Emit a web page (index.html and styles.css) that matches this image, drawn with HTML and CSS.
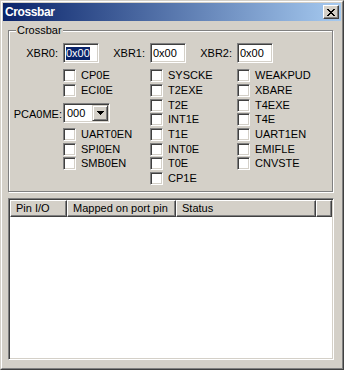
FILE: index.html
```html
<!DOCTYPE html>
<html lang="en">
<head>
<meta charset="UTF-8">
<title>Crossbar</title>
<link rel="stylesheet" href="styles.css">
</head>
<body>
<div class="window">
  <div class="frame">
    <div class="titlebar">
      <span class="title">Crossbar</span>
      <button class="close">
        <svg width="8" height="7" viewBox="0 0 8 7" shape-rendering="crispEdges"><path d="M0 0h2v1H0zM6 0h2v1H6zM1 1h2v1H1zM5 1h2v1H5zM2 2h4v1H2zM3 3h2v1H3zM2 4h4v1H2zM1 5h2v1H1zM5 5h2v1H5zM0 6h2v1H0zM6 6h2v1H6z" fill="#000"/></svg>
      </button>
    </div>

    <div class="group">
      <span class="legend">Crossbar</span>
      <div class="xbr-row">
        <div class="xbr"><span>XBR0:</span><div class="edit"><span class="sel">0x00</span></div></div>
        <div class="xbr"><span>XBR1:</span><div class="edit"><span>0x00</span></div></div>
        <div class="xbr"><span>XBR2:</span><div class="edit"><span>0x00</span></div></div>
      </div>
      <div class="bits">
        <span class="pca-label">PCA0ME:</span>
        <div class="combo">
          <span class="combo-text">000</span>
          <span class="combo-btn">
            <svg width="7" height="4" viewBox="0 0 7 4" shape-rendering="crispEdges"><path d="M0 0h7v1H0zM1 1h5v1H1zM2 2h3v1H2zM3 3h1v1H3z" fill="#000"/></svg>
          </span>
        </div>

        <label class="chk c1"><span class="box"></span>CP0E</label>
        <label class="chk c1"><span class="box"></span>ECI0E</label>
        <label class="chk c1"><span class="box"></span>UART0EN</label>
        <label class="chk c1"><span class="box"></span>SPI0EN</label>
        <label class="chk c1"><span class="box"></span>SMB0EN</label>

        <label class="chk c2"><span class="box"></span>SYSCKE</label>
        <label class="chk c2"><span class="box"></span>T2EXE</label>
        <label class="chk c2"><span class="box"></span>T2E</label>
        <label class="chk c2"><span class="box"></span>INT1E</label>
        <label class="chk c2"><span class="box"></span>T1E</label>
        <label class="chk c2"><span class="box"></span>INT0E</label>
        <label class="chk c2"><span class="box"></span>T0E</label>
        <label class="chk c2"><span class="box"></span>CP1E</label>

        <label class="chk c3"><span class="box"></span>WEAKPUD</label>
        <label class="chk c3"><span class="box"></span>XBARE</label>
        <label class="chk c3"><span class="box"></span>T4EXE</label>
        <label class="chk c3"><span class="box"></span>T4E</label>
        <label class="chk c3"><span class="box"></span>UART1EN</label>
        <label class="chk c3"><span class="box"></span>EMIFLE</label>
        <label class="chk c3"><span class="box"></span>CNVSTE</label>
      </div>
    </div>

    <div class="list">
      <div class="list-head">
        <div class="col col-pin">Pin I/O</div>
        <div class="col col-map">Mapped on port pin</div>
        <div class="col col-status">Status</div>
        <div class="col col-fill"></div>
      </div>
    </div>
  </div>
</div>
</body>
</html>
```

FILE: styles.css
```css
*{
  margin: 0;
  padding: 0;
  box-sizing: border-box;
}
body{
  font-family: "Liberation Sans", Arial, sans-serif;
  font-size: 11px;
  color: #000;
  background: #d4d0c8;
}
.window{
  width: 344px;
  height: 370px;
  border: 1px solid;
  border-color: #d4d0c8 #404040 #404040 #d4d0c8;
  background: #d4d0c8;
}
.frame{
  height: 100%;
  border: 1px solid;
  border-color: #fff #808080 #808080 #fff;
  padding: 1px;
}

/* title bar */
.titlebar{
  height: 18px;
  display: flex;
  align-items: center;
  padding: 0 2px;
  background: linear-gradient(to right, #0a246a, #a6caf0);
}
.title{
  color: #fff;
  font-weight: bold;
  font-size: 12px;
  letter-spacing: -0.4px;
}
.close{
  margin-left: auto;
  width: 16px;
  height: 14px;
  display: flex;
  align-items: center;
  justify-content: center;
  background: #d4d0c8;
  border: 1px solid;
  border-color: #fff #404040 #404040 #fff;
  box-shadow: inset -1px -1px 0 #808080;
}

/* group box */
.group{
  position: relative;
  width: 325px;
  height: 162px;
  margin: 9px 0 0 5px;
  border: 1px solid #808080;
  box-shadow: 1px 1px 0 #fff, inset 1px 1px 0 #fff;
}
.legend{
  position: absolute;
  top: -7px;
  left: 7px;
  padding: 0 1px;
  line-height: 13px;
  background: #d4d0c8;
}
.xbr-row{
  display: grid;
  grid-template-columns: repeat(3, 87px);
  margin: 12px 0 0 3px;
}
.xbr{
  display: flex;
  align-items: center;
  justify-content: flex-end;
  gap: 5px;
}
.edit{
  width: 36px;
  height: 20px;
  padding: 1px 2px;
  display: flex;
  align-items: center;
  background: #fff;
  border: 1px solid;
  border-color: #808080 #fff #fff #808080;
  box-shadow: inset 1px 1px 0 #404040, inset -1px -1px 0 #d4d0c8;
  line-height: 13px;
}
.sel{
  background: #0a246a;
  color: #fff;
}

/* check boxes */
.bits{
  display: grid;
  grid-template-columns: 54px 87px 87px 1fr;
  grid-template-rows: 15px 15px 14px 15px 15px 14px 15px 15px;
  grid-auto-flow: column;
  margin-top: 6px;
}
.chk{
  display: flex;
  align-items: center;
  gap: 5px;
  height: 13px;
  line-height: 13px;
  align-self: start;
}
.c1{ grid-column: 2; }
.c2{ grid-column: 3; }
.c3{ grid-column: 4; }
.box{
  width: 13px;
  height: 13px;
  flex: none;
  background: #fff;
  border: 1px solid;
  border-color: #808080 #fff #fff #808080;
  box-shadow: inset 1px 1px 0 #404040, inset -1px -1px 0 #d4d0c8;
}
.pca-label{
  grid-column: 1;
  grid-row: 3 / 5;
  justify-self: end;
  align-self: center;
  padding-right: 1px;
}
.combo{
  grid-column: 2;
  grid-row: 3 / 5;
  align-self: start;
  margin-top: 4px;
  width: 47px;
  height: 20px;
  display: flex;
  background: #fff;
  border: 1px solid;
  border-color: #808080 #fff #fff #808080;
  box-shadow: inset 1px 1px 0 #404040, inset -1px -1px 0 #d4d0c8;
  padding: 1px;
}
.combo-text{
  flex: 1;
  padding-left: 2px;
  line-height: 16px;
}
.combo-btn{
  width: 16px;
  display: flex;
  align-items: center;
  justify-content: center;
  background: #d4d0c8;
  border: 1px solid;
  border-color: #d4d0c8 #404040 #404040 #d4d0c8;
  box-shadow: inset 1px 1px 0 #fff, inset -1px -1px 0 #808080;
}

/* list view */
.list{
  width: 326px;
  height: 162px;
  margin: 6px 0 0 5px;
  padding: 1px;
  background: #fff;
  border: 1px solid;
  border-color: #808080 #fff #fff #808080;
  box-shadow: inset 1px 1px 0 #404040, inset -1px -1px 0 #d4d0c8;
}
.list-head{
  display: flex;
  height: 17px;
}
.col{
  height: 17px;
  padding-left: 5px;
  line-height: 15px;
  background: #d4d0c8;
  border: 1px solid;
  border-color: #fff #404040 #404040 #fff;
  box-shadow: inset -1px -1px 0 #808080;
  white-space: nowrap;
}
.col-pin{ width: 57px; }
.col-map{ width: 109px; }
.col-status{ width: 140px; }
.col-fill{ flex: 1; }
```
